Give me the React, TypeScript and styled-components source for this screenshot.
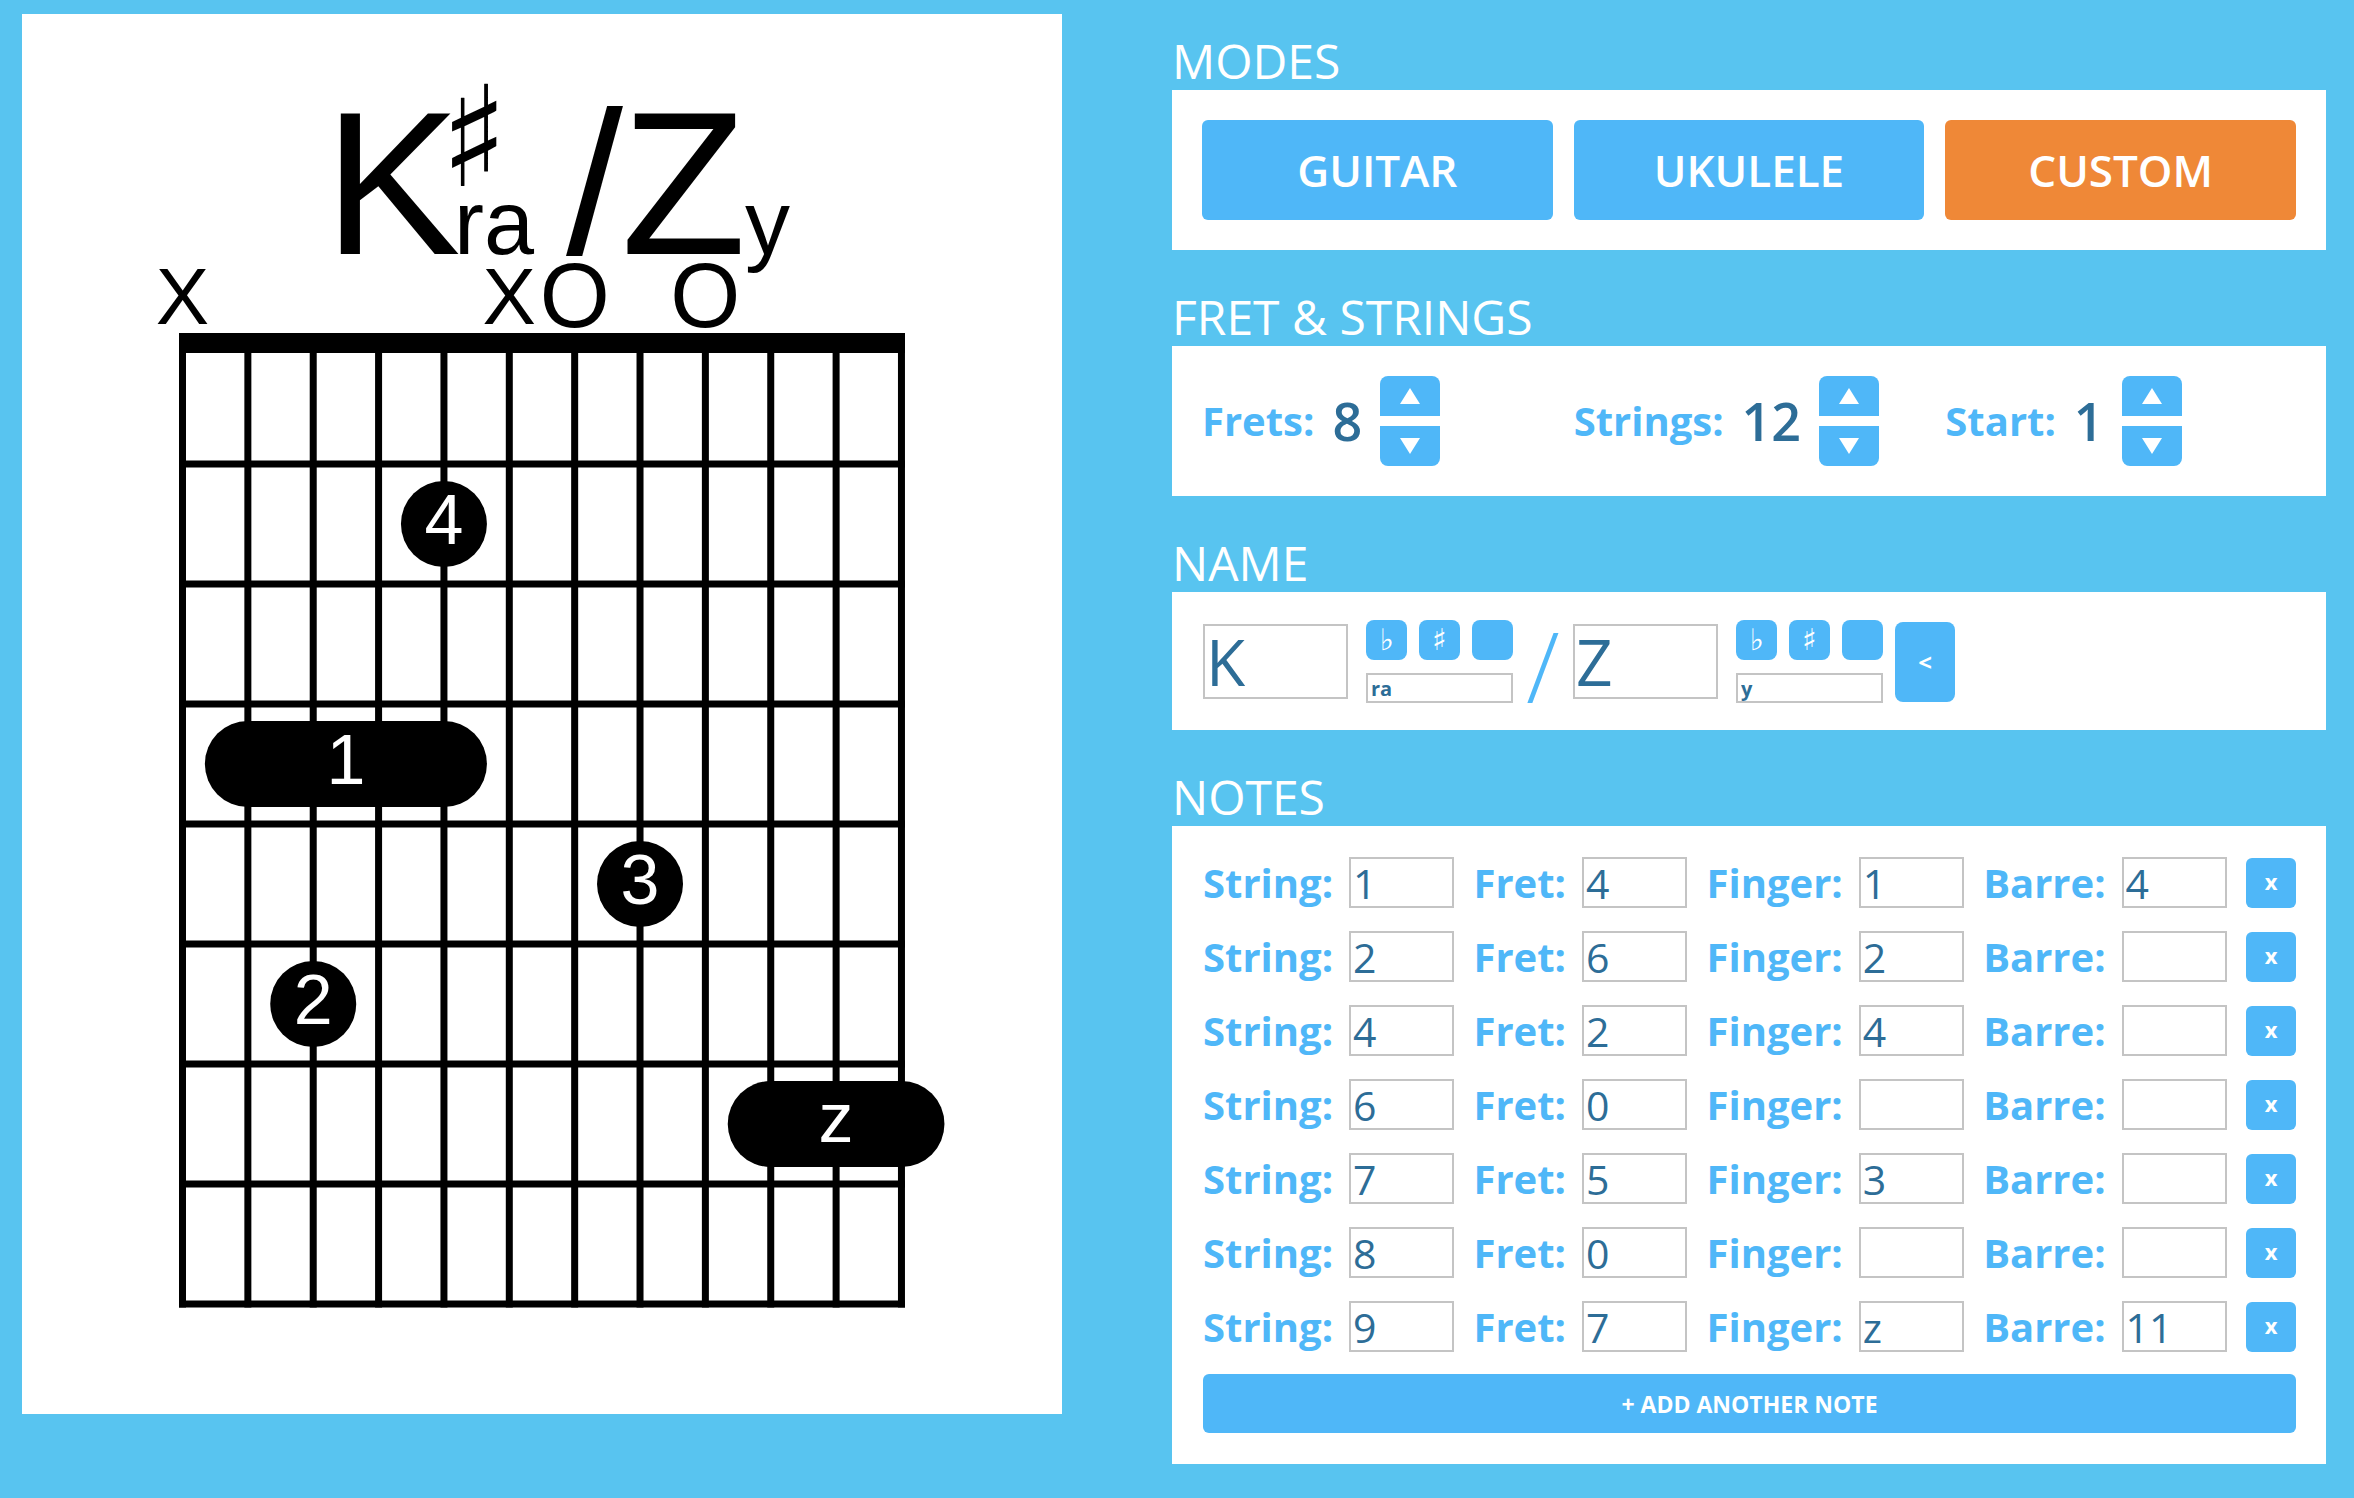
import React from "react";
import styled, { createGlobalStyle } from "styled-components";

const GlobalStyle = createGlobalStyle`
  html, body {
    margin: 0;
    padding: 0;
    background: #58c4f0;
  }
  body {
    font-family: "Open Sans", "DejaVu Sans", sans-serif;
  }
  * {
    box-sizing: border-box;
  }
`;

const BLUE = "#4fb7f8";
const DARK = "#2d6d97";
const ORANGE = "#ef8837";

const Page = styled.div`
  display: flex;
  align-items: flex-start;
  gap: 110px;
  width: 2354px;
  min-height: 1498px;
  padding: 14px 28px 34px 22px;
  background: #58c4f0;
`;

const DiagramCard = styled.div`
  flex: none;
  width: 1040px;
  height: 1400px;
  background: #fff;
`;

const Sidebar = styled.div`
  flex: none;
  width: 1154px;
  padding-top: 23px;
  display: flex;
  flex-direction: column;
`;

const Section = styled.section`
  & + & {
    margin-top: 43px;
  }
`;

const Heading = styled.h2`
  margin: 0 0 5px;
  font-size: 48px;
  line-height: 48px;
  font-weight: 400;
  color: #fff;
`;

const ModeBar = styled.div`
  display: grid;
  grid-template-columns: repeat(3, 1fr);
  gap: 21px;
  padding: 30px;
  background: #fff;
`;

const ModeButton = styled.button<{ $active?: boolean }>`
  height: 100px;
  border: none;
  border-radius: 6px;
  background: ${(p) => (p.$active ? ORANGE : BLUE)};
  color: #fff;
  font-family: "Open Sans", sans-serif;
  font-size: 44px;
  font-weight: 600;
  cursor: pointer;
`;

const FretBar = styled.div`
  display: grid;
  grid-template-columns: repeat(3, 1fr);
  gap: 21px;
  padding: 30px;
  background: #fff;
`;

const Counter = styled.div`
  display: flex;
  align-items: center;
  gap: 18px;
`;

const Label = styled.span`
  font-size: 40px;
  line-height: 40px;
  font-weight: 700;
  color: ${BLUE};
  white-space: nowrap;
`;

const Value = styled.span`
  font-size: 52px;
  line-height: 52px;
  font-weight: 600;
  color: ${DARK};
`;

const Spinner = styled.div`
  display: flex;
  flex-direction: column;
  gap: 10px;
`;

const SpinButton = styled.button<{ $down?: boolean }>`
  width: 60px;
  height: 40px;
  padding: 0;
  border: none;
  background: ${BLUE};
  border-radius: ${(p) => (p.$down ? "0 0 8px 8px" : "8px 8px 0 0")};
  display: flex;
  align-items: center;
  justify-content: center;
`;

const Arrow = styled.span<{ $down?: boolean }>`
  width: 0;
  height: 0;
  border-left: 10px solid transparent;
  border-right: 10px solid transparent;
  ${(p) => (p.$down ? "border-top: 16px solid #fff;" : "border-bottom: 16px solid #fff;")}
`;

const NameBar = styled.div`
  display: flex;
  align-items: center;
  padding: 28px 30px 27px 31px;
  background: #fff;
`;

const RootInput = styled.input`
  width: 145px;
  height: 75px;
  margin-right: 18px;
  padding: 0 1px;
  border: 2px solid #c4c4c4;
  font-family: "Open Sans", sans-serif;
  font-size: 64px;
  color: ${DARK};
  outline: none;
`;

const Accidentals = styled.div`
  display: flex;
  flex-direction: column;
  gap: 13px;
  width: 147px;
`;

const AccidentalRow = styled.div`
  display: flex;
  justify-content: space-between;
`;

const SmallButton = styled.button`
  width: 41px;
  height: 40px;
  padding: 0;
  border: none;
  border-radius: 8px;
  background: ${BLUE};
  color: #fff;
  font-family: "DejaVu Sans", sans-serif;
  font-size: 30px;
  line-height: 40px;
`;

const SuffixInput = styled.input`
  width: 147px;
  height: 30px;
  padding: 0 3px;
  border: 2px solid #c4c4c4;
  font-family: "Open Sans", sans-serif;
  font-size: 20px;
  font-weight: 700;
  color: ${DARK};
  outline: none;
`;

const Slash = styled.span`
  display: block;
  align-self: flex-start;
  width: 60px;
  height: 83px;
  font-size: 98px;
  line-height: 90px;
  font-weight: 300;
  text-align: center;
  color: ${BLUE};
`;

const Gap = styled.span<{ $w: number }>`
  flex: none;
  width: ${(p) => p.$w}px;
`;

const BackButton = styled.button`
  width: 60px;
  height: 80px;
  padding: 0;
  border: none;
  border-radius: 8px;
  background: ${BLUE};
  color: #fff;
  font-family: "Open Sans", sans-serif;
  font-size: 24px;
  font-weight: 700;
`;

const NoteList = styled.div`
  display: flex;
  flex-direction: column;
  gap: 23px;
  padding: 31px 30px 31px 31px;
  background: #fff;
`;

const NoteRow = styled.div`
  display: flex;
  align-items: center;
  justify-content: space-between;
  height: 51px;
`;

const Field = styled.label`
  display: flex;
  align-items: center;
  gap: 16px;
`;

const NoteInput = styled.input`
  width: 105px;
  height: 51px;
  padding: 0 2px;
  border: 2px solid #c4c4c4;
  font-family: "Open Sans", sans-serif;
  font-size: 41px;
  color: ${DARK};
  outline: none;
`;

const RemoveButton = styled.button`
  width: 50px;
  height: 50px;
  padding: 0 0 4px;
  border: none;
  border-radius: 6px;
  background: ${BLUE};
  color: #fff;
  font-family: "Open Sans", sans-serif;
  font-size: 22px;
  font-weight: 700;
`;

const AddButton = styled.button`
  width: 100%;
  height: 59px;
  margin-top: -1px;
  border: none;
  border-radius: 6px;
  background: ${BLUE};
  color: #fff;
  font-family: "Open Sans", sans-serif;
  font-size: 23px;
  font-weight: 700;
`;

type Note = { string: string; fret: string; finger: string; barre: string };

const notes: Note[] = [
  { string: "1", fret: "4", finger: "1", barre: "4" },
  { string: "2", fret: "6", finger: "2", barre: "" },
  { string: "4", fret: "2", finger: "4", barre: "" },
  { string: "6", fret: "0", finger: "", barre: "" },
  { string: "7", fret: "5", finger: "3", barre: "" },
  { string: "8", fret: "0", finger: "", barre: "" },
  { string: "9", fret: "7", finger: "z", barre: "11" },
];

// chord diagram geometry (coordinates inside the white card)
const STRINGS = 12;
const FRETS = 8;
const GRID_L = 157;
const GRID_R = 883;
const NUT_TOP = 319;
const sx = (k: number) => 160.5 + 65.36 * k;
const fy = (f: number) => 390 + 120 * (f - 1);
const R = 43;

const CHORD_FONT = '"Liberation Sans", Arial, sans-serif';

const ChordDiagram = () => {
  const dots = [
    { k: 2, f: 6, label: "2" },
    { k: 4, f: 2, label: "4" },
    { k: 7, f: 5, label: "3" },
  ];
  const barres = [
    { from: 1, to: 4, f: 4, label: "1" },
    { from: 9, to: 11, f: 7, label: "z" },
  ];
  const markers = [
    { k: 0, t: "X" },
    { k: 5, t: "X" },
    { k: 6, t: "O" },
    { k: 8, t: "O" },
  ];
  const bottom = 450 + 120 * (FRETS - 1) + 3.5;

  return (
    <svg width="1040" height="1400" viewBox="0 0 1040 1400">
      <g fontFamily={CHORD_FONT} fill="#000">
        <text x="302" y="240" fontSize="205">K</text>
        <text x="452" y="172" fontSize="140" textAnchor="middle" fontFamily='"DejaVu Sans", sans-serif'>
          ♯
        </text>
        <text x="432" y="240" fontSize="90">ra</text>
        <text x="544" y="240" fontSize="205">/</text>
        <text x="599" y="240" fontSize="205" textLength="121">Z</text>
        <text x="723" y="240" fontSize="90">y</text>

        {markers.map((m) =>
          m.t === "X" ? (
            <text key={m.k} x={sx(m.k)} y="310" fontSize="80" textAnchor="middle">X</text>
          ) : (
            <text key={m.k} x={sx(m.k)} y="313" fontSize="90" textAnchor="middle">O</text>
          )
        )}
      </g>

      <rect x={GRID_L} y={NUT_TOP} width={GRID_R - GRID_L} height="20" fill="#000" />
      {Array.from({ length: STRINGS }, (_, k) => (
        <rect key={"s" + k} x={sx(k) - 3.5} y={NUT_TOP} width="7" height={bottom - NUT_TOP} fill="#000" />
      ))}
      {Array.from({ length: FRETS }, (_, j) => (
        <rect key={"f" + j} x={GRID_L} y={450 + 120 * j - 3.5} width={GRID_R - GRID_L} height="7" fill="#000" />
      ))}

      {barres.map((b) => (
        <g key={b.label}>
          <rect
            x={sx(b.from) - R}
            y={fy(b.f) - R}
            width={sx(b.to) - sx(b.from) + 2 * R}
            height={2 * R}
            rx={R}
            fill="#000"
          />
          <text
            x={(sx(b.from) + sx(b.to)) / 2}
            y={fy(b.f) + (b.label === "z" ? 18 : 20)}
            fontSize="70"
            textAnchor="middle"
            fill="#fff"
            fontFamily={CHORD_FONT}
          >
            {b.label}
          </text>
        </g>
      ))}
      {dots.map((d) => (
        <g key={d.label}>
          <circle cx={sx(d.k)} cy={fy(d.f)} r={R} fill="#000" />
          <text x={sx(d.k)} y={fy(d.f) + 20} fontSize="70" textAnchor="middle" fill="#fff" fontFamily={CHORD_FONT}>
            {d.label}
          </text>
        </g>
      ))}
    </svg>
  );
};

const CounterField = ({ label, value }: { label: string; value: string }) => (
  <Counter>
    <Label>{label}</Label>
    <Value>{value}</Value>
    <Spinner>
      <SpinButton>
        <Arrow />
      </SpinButton>
      <SpinButton $down>
        <Arrow $down />
      </SpinButton>
    </Spinner>
  </Counter>
);

const NamePart = ({ root, suffix }: { root: string; suffix: string }) => (
  <>
    <RootInput readOnly value={root} />
    <Accidentals>
      <AccidentalRow>
        <SmallButton>♭</SmallButton>
        <SmallButton>♯</SmallButton>
        <SmallButton />
      </AccidentalRow>
      <SuffixInput readOnly value={suffix} />
    </Accidentals>
  </>
);

export default function App() {
  return (
    <>
      <GlobalStyle />
      <Page>
        <DiagramCard>
          <ChordDiagram />
        </DiagramCard>

        <Sidebar>
          <Section>
            <Heading>MODES</Heading>
            <ModeBar>
              <ModeButton>GUITAR</ModeButton>
              <ModeButton>UKULELE</ModeButton>
              <ModeButton $active>CUSTOM</ModeButton>
            </ModeBar>
          </Section>

          <Section>
            <Heading>FRET &amp; STRINGS</Heading>
            <FretBar>
              <CounterField label="Frets:" value="8" />
              <CounterField label="Strings:" value="12" />
              <CounterField label="Start:" value="1" />
            </FretBar>
          </Section>

          <Section>
            <Heading>NAME</Heading>
            <NameBar>
              <NamePart root="K" suffix="ra" />
              <Slash>/</Slash>
              <NamePart root="Z" suffix="y" />
              <Gap $w={12} />
              <BackButton>&lt;</BackButton>
            </NameBar>
          </Section>

          <Section>
            <Heading>NOTES</Heading>
            <NoteList>
              {notes.map((n, i) => (
                <NoteRow key={i}>
                  <Field>
                    <Label>String:</Label>
                    <NoteInput readOnly value={n.string} />
                  </Field>
                  <Field>
                    <Label>Fret:</Label>
                    <NoteInput readOnly value={n.fret} />
                  </Field>
                  <Field>
                    <Label>Finger:</Label>
                    <NoteInput readOnly value={n.finger} />
                  </Field>
                  <Field>
                    <Label>Barre:</Label>
                    <NoteInput readOnly value={n.barre} />
                  </Field>
                  <RemoveButton>x</RemoveButton>
                </NoteRow>
              ))}
              <AddButton>+ ADD ANOTHER NOTE</AddButton>
            </NoteList>
          </Section>
        </Sidebar>
      </Page>
    </>
  );
}
